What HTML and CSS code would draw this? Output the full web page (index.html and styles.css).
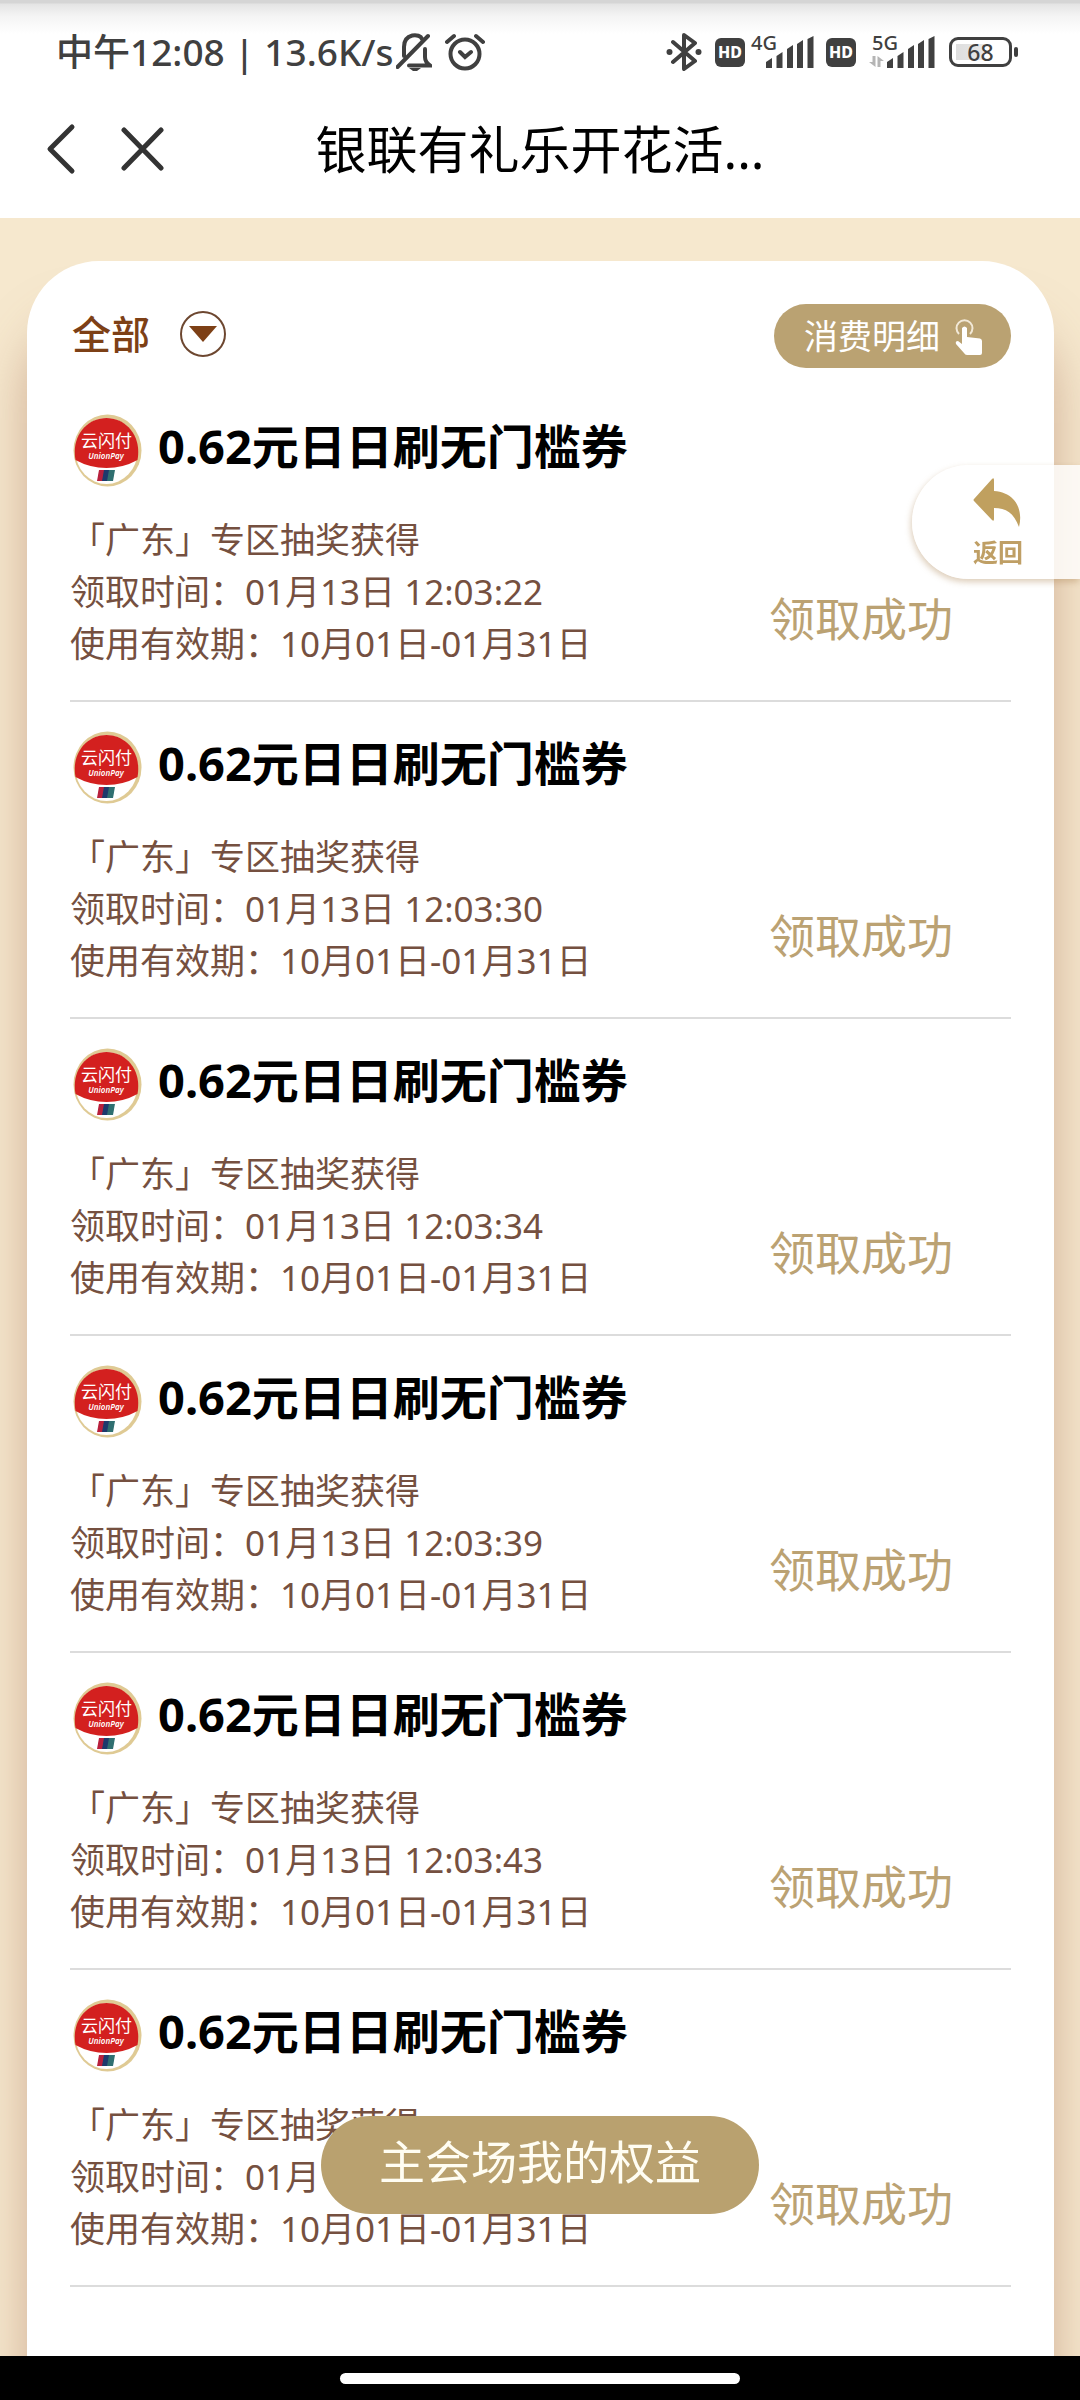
FILE: index.html
```html
<!DOCTYPE html>
<html lang="zh-CN">
<head>
    <title>银联有礼乐开花活动</title>
    <meta charset="UTF-8">
    <meta name="viewport" content="width=device-width, initial-scale=1.0">
    <link rel="stylesheet" href="styles.css">
</head>
<body>
    <!-- shared icons -->
    <svg class="sprite" aria-hidden="true">
        <symbol id="logo" viewBox="0 0 69 73">
            <ellipse cx="34.5" cy="36.5" rx="34" ry="36" fill="#dfca94"/>
            <ellipse cx="33.5" cy="37" rx="31" ry="33" fill="#fff"/>
            <path d="M2.500 46C-2 22 14 4 33.500 4S69 22 64.500 46Q50 54 33.500 54T2.500 46Z" fill="#d3201f"/>
            <text class="logo-cn" x="33.500" y="33" text-anchor="middle">云闪付</text>
            <text class="logo-en" x="33" y="45" text-anchor="middle">UnionPay</text>
            <path d="M26 56h6l-2 11h-6z" fill="#b8203c"/>
            <path d="M31 56h6l-2 11h-6z" fill="#1d3a6c"/>
            <path d="M36 56h6l-2 11h-6z" fill="#2f6f70"/>
        </symbol>
        <symbol id="signal" viewBox="0 0 48 32">
            <path d="M0 32v-6l6-4v10zM10.500 32V20l6-4v16zM21 32V13l6-4v23zM31 32V8l6-4v28zM41.500 32V3l6-3v32z" fill="#404040"/>
        </symbol>
    </svg>

    <header class="topbar">
        <div class="statusbar">
            <div class="status-left">
                <span class="clock">中午12:08 | 13.6K/s</span>
                <svg class="ico-bell" viewBox="0 0 36 38" fill="none" stroke="#404040" stroke-width="4">
                    <path d="M8 23V14C8 0 24 0 26 6M29 16v8q0 5 5 8.500H13M1.500 34 32 3" stroke-linecap="round"/>
                    <path d="M13 35h12l-4 3h-4z" fill="#404040" stroke="none"/>
                </svg>
                <svg class="ico-alarm" viewBox="0 0 40 38" fill="none" stroke="#404040" stroke-width="4" stroke-linecap="round">
                    <circle cx="20" cy="21" r="14.500"/>
                    <path d="M2 9 9 3M38 9l-7-6M15 19l5 5 6-5"/>
                </svg>
            </div>
            <div class="status-right">
                <svg class="ico-bt" viewBox="0 0 36 38" fill="none" stroke="#404040" stroke-width="4" stroke-linejoin="round">
                    <path d="M7 9l22 19-11 8V2l11 8L7 29" stroke-linecap="round"/>
                    <circle cx="3.500" cy="19" r="3" fill="#404040" stroke="none"/>
                    <circle cx="32.500" cy="19" r="3" fill="#404040" stroke="none"/>
                </svg>
                <span class="hd">HD</span>
                <span class="net net-4g">
                    <span class="net-label">4G</span>
                    <svg class="bars"><use href="#signal"/></svg>
                </span>
                <span class="hd">HD</span>
                <span class="net net-5g">
                    <span class="net-label">5G</span>
                    <svg class="arrows" viewBox="0 0 15 11" fill="#b5b5b5">
                        <path d="M3.500 0h3v11L0 6h3.500zM8.500 0 15 5h-3.500v6h-3z"/>
                    </svg>
                    <svg class="bars"><use href="#signal"/></svg>
                </span>
                <span class="battery">68</span>
            </div>
        </div>
        <nav class="navbar">
            <button class="nav-button" aria-label="返回上一页">
                <svg width="30" height="52" viewBox="0 0 30 52" fill="none" stroke="#333" stroke-width="5" stroke-linecap="round" stroke-linejoin="round"><path d="M26 4 4 26l22 22"/></svg>
            </button>
            <button class="nav-button" aria-label="关闭">
                <svg width="44" height="44" viewBox="0 0 44 44" fill="none" stroke="#333" stroke-width="5" stroke-linecap="round"><path d="M4 3l37 38M41 3 4 41"/></svg>
            </button>
            <h1>银联有礼乐开花活...</h1>
        </nav>
    </header>

    <main class="page">
        <section class="card">
            <div class="card-head">
                <label class="filter">
                    <select aria-label="筛选">
                        <option>全部</option>
                    </select>
                    <svg viewBox="0 0 46 46">
                        <circle cx="23" cy="23" r="22" fill="none" stroke="#6d4730" stroke-width="2"/>
                        <path d="M9 15h28L23 31z" fill="#7d4016"/>
                    </svg>
                </label>
                <button class="detail-button">消费明细
                    <svg viewBox="0 0 27 37" fill="#fff">
                        <path d="M4 16A8 8 0 1 1 15 16" fill="none" stroke="#f2e9d8" stroke-width="2"/>
                        <path d="M7 10q2.500-3 5 0v9l13 1.500q2 .5 2 2.500v12q0 2-2 2H12q-2 0-3-2L1 26q-1-3 2-3l4 3z"/>
                    </svg>
                </button>
            </div>

            <ul class="coupons">
                <li class="coupon">
                    <h2><svg class="logo"><use href="#logo"/></svg>0.62元日日刷无门槛券</h2>
                    <div class="info">
                        <p>「广东」专区抽奖获得</p>
                        <p>领取时间：01月13日 12:03:22</p>
                        <p>使用有效期：10月01日-01月31日</p>
                    </div>
                    <div class="state">领取成功</div>
                </li>
                <li class="coupon">
                    <h2><svg class="logo"><use href="#logo"/></svg>0.62元日日刷无门槛券</h2>
                    <div class="info">
                        <p>「广东」专区抽奖获得</p>
                        <p>领取时间：01月13日 12:03:30</p>
                        <p>使用有效期：10月01日-01月31日</p>
                    </div>
                    <div class="state">领取成功</div>
                </li>
                <li class="coupon">
                    <h2><svg class="logo"><use href="#logo"/></svg>0.62元日日刷无门槛券</h2>
                    <div class="info">
                        <p>「广东」专区抽奖获得</p>
                        <p>领取时间：01月13日 12:03:34</p>
                        <p>使用有效期：10月01日-01月31日</p>
                    </div>
                    <div class="state">领取成功</div>
                </li>
                <li class="coupon">
                    <h2><svg class="logo"><use href="#logo"/></svg>0.62元日日刷无门槛券</h2>
                    <div class="info">
                        <p>「广东」专区抽奖获得</p>
                        <p>领取时间：01月13日 12:03:39</p>
                        <p>使用有效期：10月01日-01月31日</p>
                    </div>
                    <div class="state">领取成功</div>
                </li>
                <li class="coupon">
                    <h2><svg class="logo"><use href="#logo"/></svg>0.62元日日刷无门槛券</h2>
                    <div class="info">
                        <p>「广东」专区抽奖获得</p>
                        <p>领取时间：01月13日 12:03:43</p>
                        <p>使用有效期：10月01日-01月31日</p>
                    </div>
                    <div class="state">领取成功</div>
                </li>
                <li class="coupon">
                    <h2><svg class="logo"><use href="#logo"/></svg>0.62元日日刷无门槛券</h2>
                    <div class="info">
                        <p>「广东」专区抽奖获得</p>
                        <p>领取时间：01月</p>
                        <p>使用有效期：10月01日-01月31日</p>
                    </div>
                    <div class="state">领取成功</div>
                </li>
            </ul>
        </section>
    </main>

    <a class="back-tab" href="#">
        <svg viewBox="0 0 48 50" fill="#c0a05f"><path d="M19 1q2-2 2 1v11C40 14 51 29 46 49 41 35 33 30 21 30v11q0 3-2 1L1 23q-1-1 0-2z"/></svg>
        返回
    </a>

    <div class="float-bar">
        <button class="main-button">主会场我的权益</button>
    </div>

    <footer class="homebar"><span></span></footer>
</body>
</html>
```
FILE: styles.css
```css
* { box-sizing: border-box; }
body {
    font-family: "Noto Sans", "Noto Sans CJK SC", sans-serif;
    margin: 0;
    min-height: 100vh;
    display: flex;
    flex-direction: column;
    background: #f6e8ce;
    color: #000;
}
h1, h2, p, ul { margin: 0; padding: 0; }
button { border: none; background: none; padding: 0; font-family: inherit; cursor: pointer; }
svg { display: block; flex: none; }
.sprite { display: none; }

/* status bar + title */
.topbar { height: 218px; background: #fff linear-gradient(#d5d5d5 0, #d5d5d5 3px, #e4e4e4 4px, #f4f4f4 16px, #fff 34px) no-repeat; }
.statusbar { height: 78px; padding: 26px 62px 0 56px; display: flex; justify-content: space-between; color: #404040; }
.status-left, .status-right { display: flex; align-items: center; height: 52px; }
.clock { font-size: 37px; font-weight: 500; line-height: 52px; white-space: nowrap; }
.ico-bell { width: 36px; height: 38px; margin-left: 2px; }
.ico-alarm { width: 40px; height: 38px; margin-left: 13px; }
.ico-bt { width: 36px; height: 38px; margin-right: 13px; }
.hd { width: 30px; height: 29px; border-radius: 6px; background: #404040; color: #fff; font-size: 16px; font-weight: 800; line-height: 29px; text-align: center; }
.net { position: relative; height: 32px; display: flex; justify-content: flex-end; }
.net-4g { width: 63px; margin: 0 12px 0 6px; }
.net-5g { width: 66px; margin: 0 14px 0 13px; }
.net-label { position: absolute; left: 0; top: -3px; font-size: 20px; line-height: 20px; font-weight: 500; }
.net-5g .net-label { left: 3px; }
.arrows { position: absolute; left: 0; bottom: 1px; width: 15px; height: 11px; }
.bars { width: 48px; height: 32px; }
.battery {
    position: relative;
    width: 63px;
    height: 30px;
    margin-right: 6px;
    border: 3px solid #404040;
    border-radius: 9px;
    background: linear-gradient(90deg, #dedede, #e8e8e8) 4px 4px / 28px 16px no-repeat;
    font-size: 23px;
    font-weight: 500;
    line-height: 24px;
    text-align: center;
}
.battery::after { content: ""; position: absolute; right: -9px; top: 7px; width: 4px; height: 10px; border-radius: 2px; background: #404040; }

.navbar { position: relative; height: 142px; padding: 0 46px; display: flex; align-items: center; gap: 44px; }
.navbar h1 { position: absolute; left: 50%; transform: translateX(-50%); font-size: 51px; line-height: 60px; font-weight: 400; white-space: nowrap; }
.nav-button { z-index: 1; }

/* coupon list */
.page { flex: 1; display: flex; flex-direction: column; padding: 43px 26px 0 27px; overflow: hidden; }
.card { flex: 1; padding: 43px 43px 69px; background: #fff; border-radius: 72px 72px 0 0; box-shadow: 0 60px 50px rgba(170, 115, 90, 0.5); }
.card-head { display: flex; justify-content: space-between; align-items: flex-start; height: 81px; }
.filter { position: relative; margin-top: 2px; }
.filter select { appearance: none; border: none; background: none; width: 156px; height: 56px; padding: 0 0 0 2px; color: #7d4016; font-family: inherit; font-size: 39px; font-weight: 500; line-height: 56px; cursor: pointer; }
.filter svg { position: absolute; right: 0; top: 5px; width: 46px; height: 46px; pointer-events: none; }
.detail-button { display: flex; align-items: center; gap: 15px; height: 64px; padding: 0 29px 0 30px; border-radius: 32px; background: #baa272; color: #fff; font-size: 34px; line-height: 60px; }
.detail-button svg { width: 27px; height: 37px; }

.coupons { list-style: none; }
.coupon { position: relative; padding: 29px 0 30px; border-bottom: 2px solid #dcdcdc; }
.coupon h2 { display: flex; align-items: center; gap: 16px; height: 73px; padding: 0 0 0 3px; font-size: 47px; line-height: 68px; font-weight: 700; white-space: nowrap; }
.logo { width: 69px; height: 73px; }
.coupon h2 { align-items: flex-start; line-height: 64px; }
.logo-cn { font-size: 17px; font-weight: 400; fill: #fff; }
.logo-en { font-size: 8px; font-weight: 600; font-style: italic; fill: #fff; }
.info { margin-top: 27px; color: #755040; font-size: 35px; line-height: 52px; }
.state { position: absolute; right: 58px; bottom: 48px; color: #bba273; font-size: 46px; line-height: 68px; }

/* floating controls */
.back-tab {
    position: fixed;
    right: 0;
    top: 465px;
    width: 168px;
    height: 114px;
    padding: 13px 0 0 61px;
    border-radius: 57px 0 0 57px;
    background: rgba(255, 255, 255, 0.8);
    box-shadow: -1px 3px 6px rgba(170, 130, 80, 0.4);
    color: #bf9f65;
    font-size: 25px;
    font-weight: 600;
    line-height: 48px;
    text-decoration: none;
}
.back-tab svg { width: 48px; height: 50px; }
.float-bar { position: fixed; left: 0; right: 0; bottom: 186px; display: flex; justify-content: center; pointer-events: none; }
.main-button { height: 98px; padding: 0 58px 8px; border-radius: 49px; background: #b9a16f; color: #fffdf2; font-size: 46px; line-height: 90px; pointer-events: auto; }

.homebar { position: relative; height: 44px; display: flex; align-items: center; justify-content: center; background: #000; }
.homebar span { width: 37%; height: 11px; border-radius: 6px; background: #fff; }
```
